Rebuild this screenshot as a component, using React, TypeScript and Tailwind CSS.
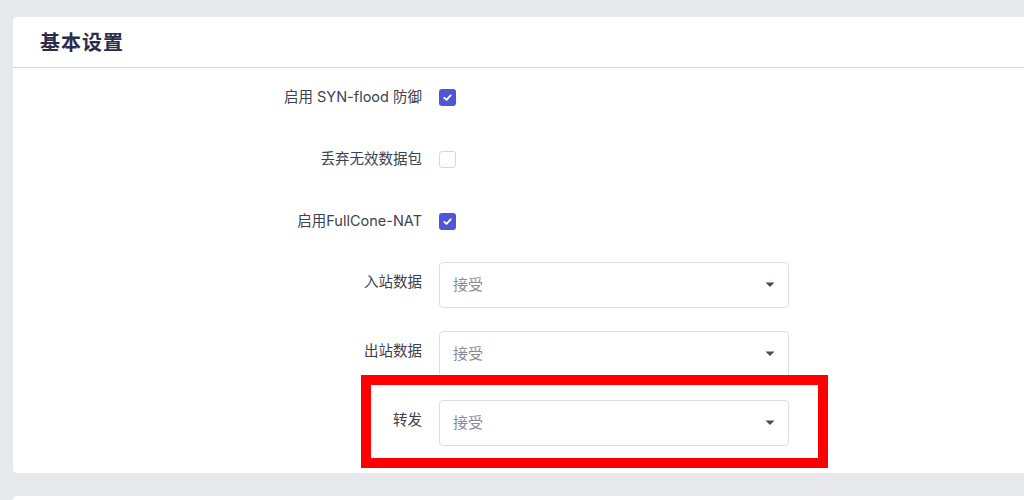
import React from "react";

const font = { fontFamily: 'Inter, "Noto Sans CJK SC", "Noto Sans", sans-serif' };

function Checkbox({ checked }: { checked: boolean }) {
  if (checked) {
    return (
      <span className="flex h-[17px] w-[17px] items-center justify-center rounded-[3px] bg-[#4f55d6]">
        <svg width="11" height="11" viewBox="0 0 12 12" fill="none">
          <path d="M2.5 6.3l2.4 2.4 4.6-5" stroke="#fff" strokeWidth="2" strokeLinecap="round" strokeLinejoin="round" />
        </svg>
      </span>
    );
  }
  return <span className="block h-[17px] w-[17px] rounded-[3px] border border-[#d6d8dd] bg-white" />;
}

function CheckRow({ label, checked }: { label: string; checked: boolean }) {
  return (
    <div className="mb-[16px] flex h-[46px] items-center">
      <div className="w-[409px] text-right text-[14.5px] text-[#3d4150]">{label}</div>
      <div className="ml-[17px]">
        <Checkbox checked={checked} />
      </div>
    </div>
  );
}

function SelectRow({ label, value, first }: { label: string; value: string; first?: boolean }) {
  return (
    <div className={`${first ? "mt-[2px]" : ""} mb-[23px] flex items-start`}>
      <div className="w-[409px] pt-[10px] text-right text-[14.5px] leading-[20px] text-[#3d4150]">{label}</div>
      <div className="ml-[17px] flex h-[46px] w-[350px] items-center justify-between rounded-[4px] border border-[#dcdfe5] bg-white pl-[13px] pr-[13px]">
        <span className="text-[15px] text-[#868b96]">{value}</span>
        <svg width="10" height="6" viewBox="0 0 10 6">
          <path d="M0.5 0.5h9L5 5z" fill="#4a4d55" />
        </svg>
      </div>
    </div>
  );
}

export default function App() {
  return (
    <div className="relative h-[500px] w-[1024px] overflow-hidden bg-[#e8e9ec]" style={font}>
      <div className="pl-[13px] pt-[17px]">
        <div className="mr-[-20px] rounded-[4px] bg-white">
          <div className="flex h-[51px] items-center border-b border-[#d9d9db] pl-[27px] pt-[1px]">
            <h2 className="text-[20px] font-bold tracking-[1px] text-[#2b2b4b]">基本设置</h2>
          </div>
          <div className="flex flex-col pt-[6px] pb-[4px]">
            <CheckRow label="启用 SYN-flood 防御" checked />
            <CheckRow label="丢弃无效数据包" checked={false} />
            <CheckRow label="启用FullCone-NAT" checked />
            <SelectRow label="入站数据" value="接受" first />
            <SelectRow label="出站数据" value="接受" />
            <SelectRow label="转发" value="接受" />
          </div>
        </div>
        <div className="mr-[-20px] mt-[23px] h-[40px] rounded-t-[4px] bg-white" />
      </div>
      <div className="pointer-events-none absolute left-[361px] top-[375px] h-[93px] w-[467px] border-[10px] border-[#ff0000]" />
    </div>
  );
}
